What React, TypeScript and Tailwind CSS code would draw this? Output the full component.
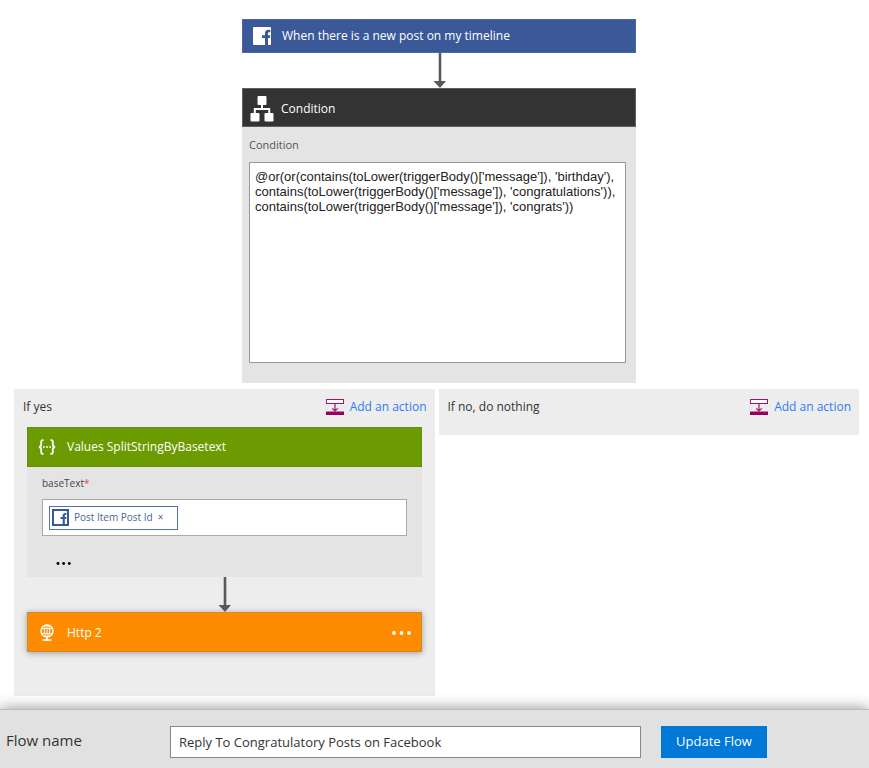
import type { ReactNode } from "react";

function FacebookIcon({ className }: { className: string }) {
  return (
    <svg viewBox="0 0 18 18" className={className} aria-hidden="true">
      <path
        fill="currentColor"
        d="M1 0H17Q18 0 18 1V17Q18 18 17 18H15V11H17L17.3 8.3H15V6.4C15 5.6 15.4 5.3 16.2 5.3H17.3V2.9C16.8 2.8 16.2 2.7 15.4 2.7C13.2 2.7 12 4 12 6.1V8.3H9V11H12V18H1Q0 18 0 17V1Q0 0 1 0Z"
      />
    </svg>
  );
}

function ConditionIcon() {
  return (
    <svg viewBox="0 0 24 26" className="h-[26px] w-6 shrink-0" fill="#fff" aria-hidden="true">
      <rect x="7.5" y="0" width="9" height="9" rx="1" />
      <rect x="0.5" y="17" width="9" height="8.5" rx="1" />
      <rect x="14.5" y="17" width="9" height="8.5" rx="1" />
      <path d="M12 8V13M4.8 18V13H19.2V18" fill="none" stroke="#fff" strokeWidth="2" />
    </svg>
  );
}

function BracesIcon() {
  return (
    <svg viewBox="0 0 18 16" className="h-4 w-[18px] shrink-0" fill="none" stroke="#fff" strokeWidth="1.8" aria-hidden="true">
      <path d="M5.5 1.2H4.8Q3.2 1.2 3.2 2.8V5.6Q3.2 7.6 1 8Q3.2 8.4 3.2 10.4V13.2Q3.2 14.8 4.8 14.8H5.5" />
      <path d="M12.5 1.2H13.2Q14.8 1.2 14.8 2.8V5.6Q14.8 7.6 17 8Q14.8 8.4 14.8 10.4V13.2Q14.8 14.8 13.2 14.8H12.5" />
      <path d="M5 8H6.8M8.1 8H9.9M11.2 8H13" strokeWidth="1.6" />
    </svg>
  );
}

function GlobeIcon() {
  return (
    <svg viewBox="0 0 18 18" className="size-[18px] shrink-0" fill="none" stroke="#fff" aria-hidden="true">
      <circle cx="9" cy="7" r="6" strokeWidth="1.4" />
      <ellipse cx="9" cy="7" rx="2.8" ry="6" strokeWidth="0.9" />
      <path d="M3.5 4.6H14.5M3.5 9.4H14.5M9 1V13" strokeWidth="0.9" />
      <path d="M9 13V16M4.5 16H13.5" strokeWidth="1.5" />
      <circle cx="9" cy="16" r="1.3" fill="#fff" stroke="none" />
    </svg>
  );
}

function AddActionIcon() {
  return (
    <svg viewBox="0 0 18 17" className="h-[17px] w-[18px]" fill="none" stroke="#a3156b" aria-hidden="true">
      <rect x="0.5" y="0.5" width="17" height="4" fill="#fff" />
      <path d="M9 5V12M6.3 9.4L9 12L11.7 9.4" strokeWidth="1.2" />
      <rect x="0" y="12.5" width="18" height="3.5" fill="#99005c" stroke="none" />
    </svg>
  );
}

function Dots({ className }: { className: string }) {
  return (
    <svg viewBox="0 0 20 4" className={className} fill="currentColor" aria-hidden="true">
      <circle cx="2" cy="2" r="1.9" />
      <circle cx="9.5" cy="2" r="1.9" />
      <circle cx="17" cy="2" r="1.9" />
    </svg>
  );
}

function Arrow() {
  return (
    <svg viewBox="0 0 14 35" className="mx-auto block h-[35px] w-[14px]" fill="#5a5a5a" aria-hidden="true">
      <path d="M6.7 0H9.3V28H14L8 35L1.5 28H6.7Z" />
    </svg>
  );
}

function Branch({ title, children }: { title: string; children?: ReactNode }) {
  return (
    <section className="min-w-0 flex-1 bg-[#ededed]">
      <header className="flex h-[38px] items-center justify-between pr-2 pl-[9px] pb-[2px]">
        <h2 className="text-xs text-[#333]">{title}</h2>
        <button type="button" className="flex items-center gap-[6px] text-xs text-[#2e7cf6]">
          <AddActionIcon />
          Add an action
        </button>
      </header>
      {children}
    </section>
  );
}

export default function App() {
  return (
    <div className="flex min-h-screen flex-col bg-white font-['Open_Sans','Noto_Sans',sans-serif] text-[#333]">
      <main className="pt-[19px]">
        <div className="flex justify-center pl-[9px]">
          <div className="w-full max-w-[394px]">
            <div className="flex h-[34px] items-center gap-[11px] border border-[#4a68a5] bg-[#3b5998] pl-[10px] text-xs text-white">
              <FacebookIcon className="size-[18px]" />
              <h2>When there is a new post on my timeline</h2>
            </div>
            <Arrow />
            <section className="bg-[#e4e4e4]">
              <div className="flex h-[39px] items-center gap-[7px] border border-[#606060] bg-[#333] pt-[2px] pl-[7px] text-xs text-white">
                <ConditionIcon />
                <h2>Condition</h2>
              </div>
              <div className="px-[7px] pt-[9px] pb-5">
                <label htmlFor="condition" className="block h-[26px] text-[11px] leading-[18px] text-[#555]">
                  Condition
                </label>
                <textarea
                  id="condition"
                  className="block h-[201px] w-[377px] max-w-full resize-none border border-[#999] bg-white px-[5px] pt-[6px] font-['Liberation_Sans',Arial,sans-serif] text-[13px] leading-[15px] text-[#222] outline-none"
                  defaultValue={
                    "@or(or(contains(toLower(triggerBody()['message']), 'birthday'),\ncontains(toLower(triggerBody()['message']), 'congratulations')),\ncontains(toLower(triggerBody()['message']), 'congrats'))"
                  }
                />
              </div>
            </section>
          </div>
        </div>

        <div className="mt-[6px] flex items-start gap-1 pr-[10px] pl-[14px]">
          <Branch title="If yes">
            <div className="px-[13px] pb-11">
              <section className="bg-[#e4e4e4]">
                <div className="flex h-10 items-center gap-[11px] border border-[#649010] bg-[#6b9b00] pl-[10px] text-xs text-white">
                  <BracesIcon />
                  <h3>Values SplitStringByBasetext</h3>
                </div>
                <div className="h-[110px] px-[15px] pt-[7px]">
                  <label htmlFor="base-text" className="block h-[25px] text-[10px] leading-[18px] text-[#444]">
                    baseText<span className="text-[#f04040]">*</span>
                  </label>
                  <div className="flex h-[37px] items-center border border-[#aaa] bg-white px-[6px]">
                    <span className="flex h-6 w-[129px] shrink-0 items-center border border-[#5672ad] pl-[2px] text-[10px] text-[#4a66a0]">
                      <span className="flex size-[17px] items-center justify-center bg-[#3b5998] text-white">
                        <FacebookIcon className="size-[13px]" />
                      </span>
                      <span className="ml-[5px]">Post Item Post Id</span>
                      <button type="button" aria-label="Remove Post Item Post Id" className="ml-[5px]">
                        ×
                      </button>
                    </span>
                    <input id="base-text" type="text" className="h-full min-w-0 flex-1 text-xs outline-none" />
                  </div>
                  <button type="button" aria-label="More options" className="mt-[26px] ml-[14px] block text-black">
                    <Dots className="h-[3px] w-4" />
                  </button>
                </div>
              </section>
              <Arrow />
              <div className="flex h-10 items-center gap-[11px] border border-[#d48a2e] bg-[#ff8c00] pt-px pr-[9px] pl-[10px] text-xs text-white shadow-[0_1px_6px_rgba(0,0,0,0.35)]">
                <GlobeIcon />
                <h3>Http 2</h3>
                <button type="button" aria-label="More options for Http 2" className="ml-auto">
                  <Dots className="h-1 w-5" />
                </button>
              </div>
            </div>
          </Branch>
          <Branch title="If no, do nothing">
            <div className="h-2" />
          </Branch>
        </div>
      </main>

      <footer className="mt-auto flex h-[59px] items-start border-t border-[#bdbdbd] bg-[#e1e1e1] px-[6px] pt-4 shadow-[0_0_14px_rgba(0,0,0,0.45)]">
        <label htmlFor="flow-name" className="w-[164px] shrink-0 text-[15px] leading-7 text-[#333]">
          Flow name
        </label>
        <input
          id="flow-name"
          type="text"
          defaultValue="Reply To Congratulatory Posts on Facebook"
          className="h-8 w-[471px] min-w-0 border border-[#888] bg-white px-2 text-[13px] text-[#333] outline-none"
        />
        <button type="button" className="ml-5 h-8 w-[106px] shrink-0 bg-[#0078d7] text-[13px] text-white">
          Update Flow
        </button>
      </footer>
    </div>
  );
}
